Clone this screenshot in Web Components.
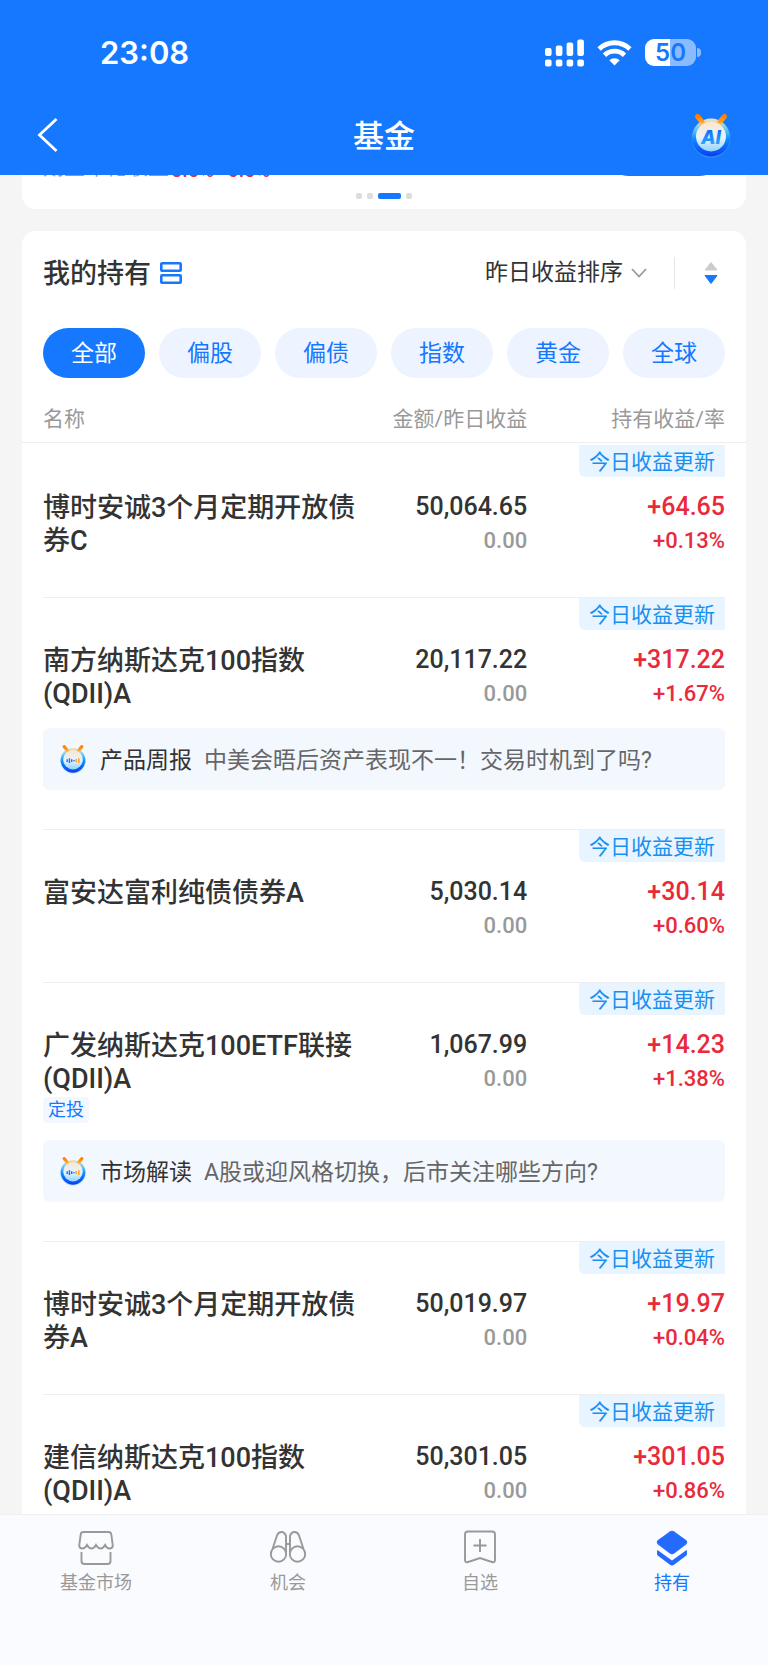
<!DOCTYPE html>
<html lang="zh-CN">
<head>
<meta charset="UTF-8">
<meta name="viewport" content="width=device-width, initial-scale=1">
<title>基金</title>
<style>
  :root {
    --blue: #1677ff;
    --red: #e92a3a;
    --ink: #333333;
    --muted: #999999;
    --line: #eeeeee;
    --note: #f3f8ff;
    --gutter: 21px;
  }
  body {
    margin: 0;
    background: #f5f5f5;
    color: var(--ink);
    font-family: Roboto, "Noto Sans CJK SC", sans-serif;
  }
</style>
</head>
<body>

<fund-app>
  <status-bar slot="top" time="23:08" battery="50"></status-bar>
  <nav-bar slot="top">基金</nav-bar>

  <promo-card>期望年化收益<b slot="rate">5.0%~6.0%</b></promo-card>

  <holdings-card heading="我的持有">
    <filter-chips slot="filters"></filter-chips>
    <holdings-table></holdings-table>
  </holdings-card>

  <tab-bar slot="bottom">
    <tab-item icon="market">基金市场</tab-item>
    <tab-item icon="chance">机会</tab-item>
    <tab-item icon="watch">自选</tab-item>
    <tab-item icon="hold" active>持有</tab-item>
  </tab-bar>
</fund-app>

<script>
const FONDOS = [
  { name: '博时安诚3个月定期开放债券C', amount: '50,064.65', day: '0.00', gain: '+64.65', rate: '+0.13%' },
  { name: '南方纳斯达克100指数(QDII)A', amount: '20,117.22', day: '0.00', gain: '+317.22', rate: '+1.67%',
    note: ['产品周报', '中美会晤后资产表现不一！交易时机到了吗?'] },
  { name: '富安达富利纯债债券A', amount: '5,030.14', day: '0.00', gain: '+30.14', rate: '+0.60%' },
  { name: '广发纳斯达克100ETF联接(QDII)A', amount: '1,067.99', day: '0.00', gain: '+14.23', rate: '+1.38%',
    tag: '定投', note: ['市场解读', 'A股或迎风格切换，后市关注哪些方向?'] },
  { name: '博时安诚3个月定期开放债券A', amount: '50,019.97', day: '0.00', gain: '+19.97', rate: '+0.04%' },
  { name: '建信纳斯达克100指数(QDII)A', amount: '50,301.05', day: '0.00', gain: '+301.05', rate: '+0.86%' }
];

// Page frame: fixed top and bottom, the middle scrolls
class FundApp extends HTMLElement {
  constructor() {
    super();
    this.attachShadow({ mode: 'open' }).innerHTML = `
      <style>
        :host { display: flex; flex-direction: column; height: 100vh; }
        header { background: var(--blue); color: #fff; }
        main {
          flex: 1; min-height: 0; overflow-y: auto; scrollbar-width: none;
          display: flex; flex-direction: column; gap: 22px; padding: 0 22px;
        }
      </style>
      <header><slot name="top"></slot></header>
      <main><slot></slot></main>
      <slot name="bottom"></slot>`;
  }
}
customElements.define('fund-app', FundApp);

class StatusBar extends HTMLElement {
  connectedCallback() {
    const shadow = this.attachShadow({ mode: 'open' });
    shadow.innerHTML = `
      <style>
        :host {
          display: flex; align-items: center; justify-content: space-between;
          box-sizing: border-box; height: 95px; padding: 10px 67px 0 100px;
          font-family: Inter, sans-serif; font-weight: 600;
        }
        .time { font-size: 31px; line-height: 40px; }
        .icons { display: flex; align-items: center; gap: 13px; }
        svg { display: block; }
        .battery { display: flex; align-items: center; gap: 1px; }
        .cell {
          width: 51px; height: 27px; border-radius: 9px; text-align: center;
          font-size: 24px; line-height: 27px; color: var(--blue);
          background: linear-gradient(90deg, #fff 50%, #8bbbff 50%);
        }
        .nub { width: 4px; height: 9px; border-radius: 0 4px 4px 0; background: #8bbbff; }
      </style>
      <span class="time">${this.getAttribute('time')}</span>
      <div class="icons">
        <svg width="39" height="28" viewBox="0 0 39 28" fill="#fff">
          <rect x="0" y="9" width="6.6" height="8" rx="2"/><rect x="10.8" y="6.5" width="6.6" height="10.5" rx="2"/>
          <rect x="21.6" y="3.5" width="6.6" height="13.5" rx="2"/><rect x="32.3" y="0.5" width="6.6" height="16.5" rx="2"/>
          <rect x="0" y="20.5" width="6.6" height="7" rx="2"/><rect x="10.8" y="20.5" width="6.6" height="7" rx="2"/>
          <rect x="21.6" y="20.5" width="6.6" height="7" rx="2"/><rect x="32.3" y="20.5" width="6.6" height="7" rx="2"/>
        </svg>
        <svg width="35" height="26" viewBox="0 0 34 26" fill="none" stroke="#fff" stroke-width="4.8">
          <path d="M1.6 8.9a22.3 22.3 0 0 1 30.8 0"/>
          <path d="M7 15.2a14.5 14.5 0 0 1 20 0"/>
          <path d="M17 25.5l-5.200-5.300a7.600 7.600 0 0 1 10.400 0z" fill="#fff" stroke="none"/>
        </svg>
        <div class="battery"><div class="cell">${this.getAttribute('battery')}</div><div class="nub"></div></div>
      </div>`;
  }
}
customElements.define('status-bar', StatusBar);

// Round horned robot. face="ai" writes AI on it, otherwise it shows sound bars
class MascotIcon extends HTMLElement {
  connectedCallback() {
    const ai = this.getAttribute('face') === 'ai';
    const face = ai
      ? `<text x="20" y="30" text-anchor="middle" font-family="Inter, sans-serif" font-size="19" font-weight="800" font-style="italic" fill="url(#t)">AI</text>`
      : `<path d="M11 22v4M14.500 20.500v7M18 22v4" stroke="#1a6dff" stroke-width="2.200"/>
         <path d="M21.500 23v2" stroke="#1a6dff" stroke-width="2.200"/>
         <path d="M25 21.500v5M29 20.500v7" stroke="#ffa51f" stroke-width="2.400"/>`;
    const shadow = this.attachShadow({ mode: 'open' });
    shadow.innerHTML = `
      <style>
        :host { display: block; flex: none; width: 40px; height: 43px; }
        :host([small]) { width: 26px; height: 28px; }
        svg { display: block; width: 100%; height: 100%; overflow: visible; }
      </style>
      <svg viewBox="0 0 40 43" aria-hidden="true">
        <defs>
          <linearGradient id="r" x1="0" y1="0" x2="0" y2="1">
            <stop offset="0" stop-color="#ffe3b0"/><stop offset=".25" stop-color="#6fcdf3"/>
            <stop offset=".55" stop-color="#0a8cff"/><stop offset="1" stop-color="#0a3df2"/>
          </linearGradient>
          <linearGradient id="f" x1="0" y1="0" x2="0" y2="1">
            <stop offset="0" stop-color="#fbe6cf"/><stop offset=".55" stop-color="#e6f3fb"/>
            <stop offset="1" stop-color="#8fd3ff"/>
          </linearGradient>
          <linearGradient id="h" gradientUnits="userSpaceOnUse" x1="0" y1="1" x2="0" y2="13">
            <stop offset="0" stop-color="#ff7a00"/><stop offset=".5" stop-color="#ff9c1c"/><stop offset="1" stop-color="#ffd58f"/>
          </linearGradient>
          <linearGradient id="t" x1="0" y1="0" x2="0" y2="1">
            <stop offset="0" stop-color="#0a5cff"/><stop offset="1" stop-color="#35b6ff"/>
          </linearGradient>
        </defs>
        <circle cx="20" cy="24.500" r="19.500" fill="#5db4ff" opacity=".3"/>
        <circle cx="20" cy="23.500" r="19" fill="url(#r)"/>
        <path d="M6.500 2.500q3.500 3 6 9M33.500 2.500q-3.500 3-6 9" fill="none" stroke="url(#h)" stroke-width="5" stroke-linecap="round"/>
        <circle cx="20" cy="22.500" r="15" fill="url(#f)"/>
        ${face}
      </svg>`;
  }
}
customElements.define('mascot-icon', MascotIcon);

class NavBar extends HTMLElement {
  constructor() {
    super();
    this.attachShadow({ mode: 'open' }).innerHTML = `
      <style>
        :host {
          display: grid; grid-template-columns: 1fr auto 1fr; align-items: center;
          height: 80px; padding: 0 37px;
        }
        h1 { margin: 0; padding-top: 3px; font-size: 31px; line-height: 40px; font-weight: 500; }
        button { border: 0; padding: 0; background: none; color: inherit; display: block; }
        .ai { justify-self: end; }
        svg { display: block; }
      </style>
      <button aria-label="返回">
        <svg width="21" height="34" viewBox="0 0 21 34" fill="none" stroke="#fff" stroke-width="2.800"><path d="M19.500 1L2.500 17l17 16"/></svg>
      </button>
      <h1><slot></slot></h1>
      <button class="ai" aria-label="助手"><mascot-icon face="ai"></mascot-icon></button>`;
  }
}
customElements.define('nav-bar', NavBar);

// Tail of the carousel that is left after scrolling down
class PromoCard extends HTMLElement {
  constructor() {
    super();
    this.attachShadow({ mode: 'open' }).innerHTML = `
      <style>
        :host {
          display: flex; flex-direction: column; justify-content: flex-end; flex: none;
          box-sizing: border-box; height: 34px; overflow: hidden;
          padding: 0 var(--gutter) 10px; background: #fff; border-radius: 0 0 14px 14px;
        }
        .offer { display: flex; justify-content: space-between; align-items: flex-end; flex: none; }
        p { display: flex; align-items: flex-end; margin: 0; font-size: 21px; line-height: 30px; color: var(--muted); }
        ::slotted(b) { color: var(--red); font-weight: 500; font-size: 20px; line-height: 24px; margin-left: 2px; }
        .buy { width: 122px; height: 52px; margin-bottom: 6px; border-radius: 26px; background: var(--blue); }
        .dots { display: flex; justify-content: center; gap: 5px; margin-top: 11px; }
        i { width: 6px; height: 6px; border-radius: 2px; background: #ddd; }
        i.on { width: 23px; background: var(--blue); }
      </style>
      <div class="offer"><p><slot></slot><slot name="rate"></slot></p><div class="buy"></div></div>
      <div class="dots"><i></i><i></i><i class="on"></i><i></i></div>`;
  }
}
customElements.define('promo-card', PromoCard);

class HoldingsCard extends HTMLElement {
  connectedCallback() {
    const shadow = this.attachShadow({ mode: 'open' });
    shadow.innerHTML = `
      <style>
        :host { display: block; flex: none; background: #fff; border-radius: 14px 14px 0 0; }
        .head { display: flex; align-items: center; height: 83px; padding: 0 var(--gutter); }
        h2 { margin: 0 9px 0 0; padding-top: 2px; font-size: 27px; line-height: 36px; font-weight: 500; }
        svg { display: block; }
        label { display: flex; align-items: center; gap: 8px; margin-left: auto; }
        select {
          appearance: none; border: 0; padding: 0; margin: 0; background: none;
          font: 23px/32px Roboto, "Noto Sans CJK SC", sans-serif; color: var(--ink);
        }
        .rule { width: 1px; height: 32px; margin: 0 29px 0 27px; background: #e5e5e5; }
        button { border: 0; padding: 0; margin-right: 7px; background: none; }
      </style>
      <div class="head">
        <h2>${this.getAttribute('heading')}</h2>
        <svg width="22" height="22" viewBox="0 0 22 22" fill="none" stroke="#1677ff" stroke-width="2.600"><rect x="1.300" y="1.300" width="19.400" height="7.400" rx=".8"/><rect x="1.300" y="13.300" width="19.400" height="7.400" rx=".8"/></svg>
        <label>
          <select aria-label="排序"><option>昨日收益排序</option></select>
          <svg width="16" height="10" viewBox="0 0 16 10" fill="none" stroke="#999" stroke-width="1.800"><path d="M1 1l7 7.500L15 1"/></svg>
        </label>
        <span class="rule"></span>
        <button aria-label="降序">
          <svg width="14" height="22" viewBox="0 0 14 22"><path d="M7 .5L13 8H1z" fill="#ccc" stroke="#ccc" stroke-linejoin="round"/><path d="M7 21.500L1 13.500h12z" fill="#1677ff" stroke="#1677ff" stroke-linejoin="round"/></svg>
        </button>
      </div>
      <slot name="filters"></slot>
      <slot></slot>`;
  }
}
customElements.define('holdings-card', HoldingsCard);

class FilterChips extends HTMLElement {
  connectedCallback() {
    const chips = ['全部', '偏股', '偏债', '指数', '黄金', '全球'];
    const shadow = this.attachShadow({ mode: 'open' });
    shadow.innerHTML = `
      <style>
        :host { display: flex; gap: 14px; padding: 14px var(--gutter) 0; }
        button {
          flex: 1; height: 50px; border: 0; padding: 2px 0 0; border-radius: 25px;
          background: #edf4ff; color: var(--blue);
          font: 23px/32px Roboto, "Noto Sans CJK SC", sans-serif;
        }
        button[aria-pressed="true"] { background: var(--blue); color: #fff; }
      </style>
      ${chips.map((c, i) => `<button aria-pressed="${i === 0}">${c}</button>`).join('')}`;
    shadow.addEventListener('click', e => {
      if (!e.target.matches('button')) return;
      shadow.querySelectorAll('button').forEach(b => b.setAttribute('aria-pressed', b === e.target));
    });
  }
}
customElements.define('filter-chips', FilterChips);

class UpdateBadge extends HTMLElement {
  constructor() {
    super();
    this.attachShadow({ mode: 'open' }).innerHTML = `
      <style>
        :host {
          display: block; width: max-content; padding: 3px 10px 0; margin: 0 0 14px auto;
          border-radius: 2px 2px 2px 6px; background: #e8f4ff; color: #1890f0;
          font-size: 21px; line-height: 29px;
        }
      </style>
      <slot></slot>`;
  }
}
customElements.define('update-badge', UpdateBadge);

class FundNote extends HTMLElement {
  connectedCallback() {
    const shadow = this.attachShadow({ mode: 'open' });
    shadow.innerHTML = `
      <style>
        :host { display: block; }
        a {
          display: flex; align-items: center; height: 62px; padding: 0 17px; border-radius: 6px;
          background: var(--note); color: #666; text-decoration: none; font-size: 23px; line-height: 32px;
        }
        strong { margin: 0 12px 0 14px; font-weight: 400; color: var(--ink); }
        strong, span { padding-top: 3px; }
      </style>
      <a href="#"><mascot-icon small></mascot-icon><strong>${this.getAttribute('kind')}</strong><span><slot></slot></span></a>`;
  }
}
customElements.define('fund-note', FundNote);

class HoldingsTable extends HTMLElement {
  connectedCallback() {
    const shadow = this.attachShadow({ mode: 'open' });
    shadow.innerHTML = `
      <style>
        table, thead, tbody { display: block; }
        tr { display: grid; grid-template-columns: 46fr 25fr 29fr; }
        th, td { padding: 0; text-align: right; font-weight: 400; }
        th:first-child, td:first-child { text-align: left; }
        thead { padding: 27px var(--gutter) 9px; border-bottom: 1px solid var(--line); margin-bottom: 2px; }
        th { font-size: 21px; line-height: 28px; color: var(--muted); }

        tbody { margin: 0 var(--gutter); padding-bottom: 22px; border-top: 1px solid var(--line); }
        thead + tbody { border-top: 0; }
        tbody.noted { padding-bottom: 39px; }
        .fund { min-height: 130px; box-sizing: border-box; padding-bottom: 17px; }
        .name { padding-top: 47px; font-size: 27px; line-height: 33px; font-weight: 500; }
        .amount { padding-top: 46px; }
        .big { display: block; font-size: 25px; line-height: 32px; font-weight: 500; }
        .small { display: block; font-size: 22px; line-height: 35px; font-weight: 500; }
        .amount .small { color: var(--muted); }
        .gain { color: var(--red); }
        .tag {
          display: block; width: max-content; margin-top: 1px; padding: 0 5px; border-radius: 4px;
          background: var(--note); color: var(--blue); font-size: 18px; line-height: 26px; font-weight: 400;
        }
        .note { display: block; }
        .note td { display: block; }
      </style>
      <table>
        <thead><tr><th>名称</th><th>金额/昨日收益</th><th>持有收益/率</th></tr></thead>
        ${FONDOS.map(f => this.fila(f)).join('')}
      </table>`;
  }

  fila(f) {
    return `
      <tbody class="${f.note ? 'noted' : ''}">
        <tr class="fund">
          <td class="name">${f.name}${f.tag ? `<span class="tag">${f.tag}</span>` : ''}</td>
          <td class="amount"><span class="big">${f.amount}</span><span class="small">${f.day}</span></td>
          <td class="gain"><update-badge>今日收益更新</update-badge><span class="big">${f.gain}</span><span class="small">${f.rate}</span></td>
        </tr>
        ${f.note ? `<tr class="note"><td colspan="3"><fund-note kind="${f.note[0]}">${f.note[1]}</fund-note></td></tr>` : ''}
      </tbody>`;
  }
}
customElements.define('holdings-table', HoldingsTable);

class TabBar extends HTMLElement {
  constructor() {
    super();
    this.attachShadow({ mode: 'open' }).innerHTML = `
      <style>
        :host { display: block; flex: none; background: #fafbff; border-top: 1px solid var(--line); }
        nav { display: flex; padding: 15px 0 69px; }
      </style>
      <nav><slot></slot></nav>`;
  }
}
customElements.define('tab-bar', TabBar);

const ICONOS = {
  market: `<path d="M5.500 2h25q2.500 0 2.800 2.500l1.500 11q0 3-3.500 3-2.500 0-4.200-3.500-2 3.500-4.500 3.500T18 15q-2 3.500-4.500 3.500T9 15q-2 3.500-4.500 3.500-3.300 0-3.300-3l1.500-11Q3 2 5.500 2z"/><path d="M3.500 22v9q0 3 3 3h23q3 0 3-3v-9"/>`,
  chance: `<circle cx="8.500" cy="24" r="7.700"/><circle cx="27.500" cy="24" r="7.700"/><path d="M2.500 19L7 5.500q1.300-3.500 4.500-3.500T16 6v16M33.500 19L29 5.500Q27.700 2 24.500 2T20 6v16M16 14h4"/>`,
  watch: `<path d="M6 1.500h24q3 0 3 3V30q0 2.500-2.500 2.200L18 28 5.500 32.200Q3 32.500 3 30V4.500q0-3 3-3z"/><path d="M18 9v13M11.500 15.500h13"/>`,
  hold: `<g fill="#246bfd" stroke="none"><path d="M15.800 1.500q2.200-1.300 4.400 0L32 10q2.500 2.200 0 4.500l-11.800 9q-2.200 1.500-4.400 0L4 14.500q-2.500-2.300 0-4.500z"/><path d="M3 20.500q.5-.5 1.500.2L18 30.500l13.500-9.800q1-.7 1.500-.2v3.500q0 1-1 1.800L20 34.800q-2 1.200-4 0L4 25.800q-1-.8-1-1.800z"/></g>`
};

class TabItem extends HTMLElement {
  connectedCallback() {
    const shadow = this.attachShadow({ mode: 'open' });
    shadow.innerHTML = `
      <style>
        :host { display: block; flex: 1; color: var(--muted); }
        :host([active]) { color: var(--blue); }
        a {
          display: flex; flex-direction: column; align-items: center; gap: 4px;
          color: inherit; text-decoration: none; font-size: 18px; line-height: 26px;
        }
        svg { display: block; }
      </style>
      <a href="#"><svg width="36" height="36" viewBox="0 0 36 36" fill="none" stroke="#999" stroke-width="1.900">${ICONOS[this.getAttribute('icon')]}</svg><slot></slot></a>`;
  }
}
customElements.define('tab-item', TabItem);
</script>
</body>
</html>
